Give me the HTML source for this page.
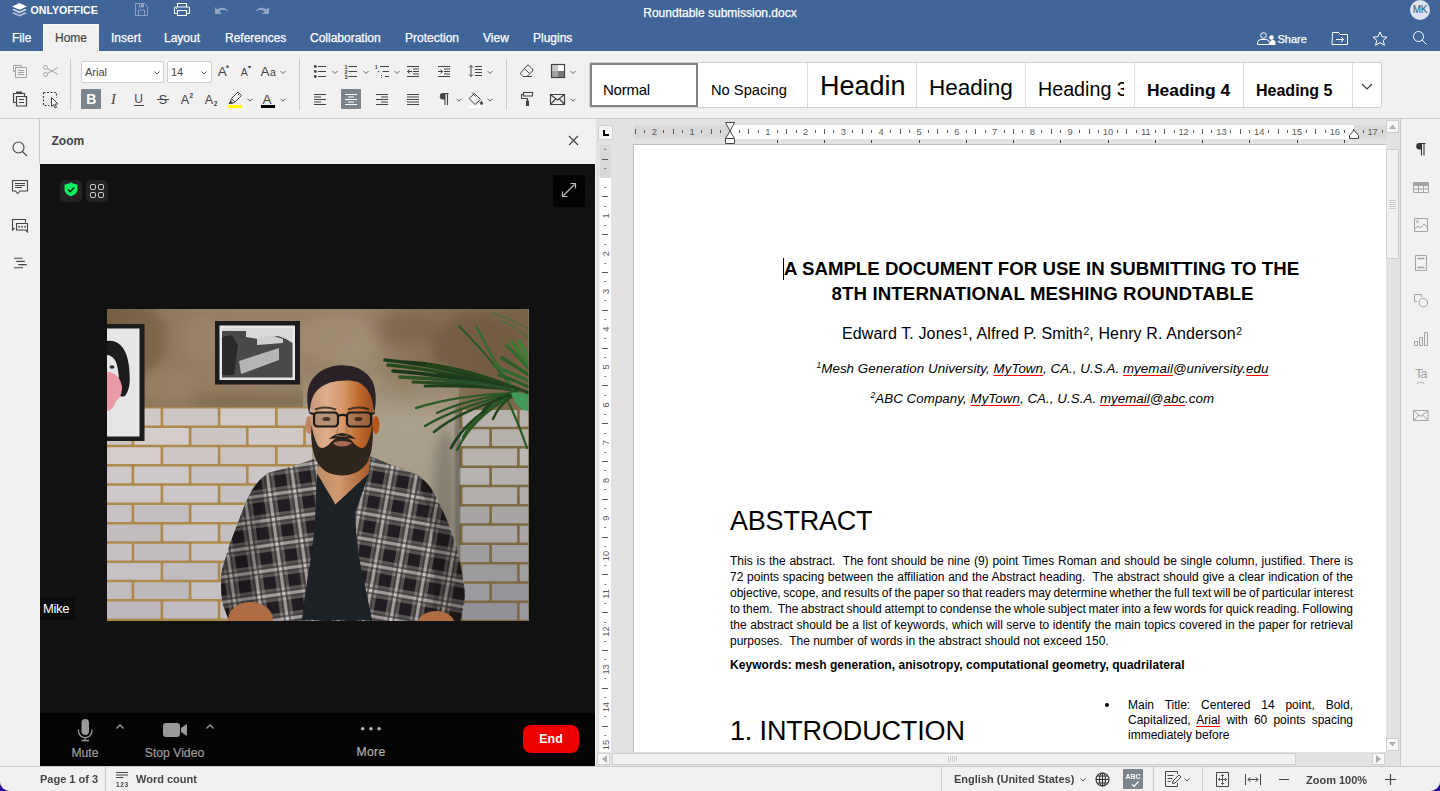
<!DOCTYPE html>
<html lang="en">
<head>
<meta charset="utf-8">
<title>Roundtable submission.docx</title>
<style>
*{box-sizing:border-box;margin:0;padding:0}
html,body{width:1440px;height:791px;overflow:hidden;background:#2a0a9c}
body{font-family:"Liberation Sans",Arial,sans-serif;font-size:11px;color:#444;position:relative}
#app{position:absolute;left:0;top:0;width:1440px;height:791px;background:#f1f1f1;border-radius:0 0 10px 10px;overflow:hidden}
.abs{position:absolute}
#hdr{position:absolute;left:0;top:0;width:1440px;height:51px;background:#3f6599}
#hdr .title{position:absolute;left:0;width:1440px;top:6px;text-align:center;color:#fff;font-size:12px;line-height:14px;-webkit-text-stroke:.25px #fff}
#hdr .logo{position:absolute;left:30.500px;top:3px;color:#fff;font-weight:bold;font-size:10.600px;line-height:14px;letter-spacing:0}
.tab{position:absolute;top:24px;height:27px;line-height:28px;color:#fff;font-size:12px;white-space:nowrap;-webkit-text-stroke:.25px #fff}
.tab.act{background:#f1f1f1;color:#444;text-align:center;box-shadow:inset 1px 1px 0 #fafafa;-webkit-text-stroke:.2px #444}
#tb{position:absolute;left:0;top:51px;width:1440px;height:68px;background:#f1f1f1;border-bottom:1px solid #cbcbcb}
.sep{position:absolute;width:1px;background:#cbcbcb;top:59px;height:51px}
.combo{position:absolute;height:22px;background:#fff;border:1px solid #cfcfcf;border-radius:2px;font-size:11px;line-height:21px;padding-left:3px;color:#444}
.btnact{position:absolute;background:#7d858c;border-radius:1px}
svg{position:absolute;overflow:visible}
.ic{fill:none;stroke:#444;stroke-width:1}
#gal{position:absolute;left:589px;top:62px;width:793px;height:46px;background:#fff;border:1px solid #cfcfcf;border-radius:2px}
.st{position:absolute;top:0;height:44px;border-right:1px solid #dcdcdc;color:#000;white-space:nowrap;overflow:hidden}
.st span{position:absolute;left:13px}
.st span.cl{left:12px;width:86px;overflow:hidden;height:36px}
#lsb{position:absolute;left:0;top:119px;width:40px;height:648px;background:#f1f1f1}
#zp{position:absolute;left:41px;top:119px;width:554px;height:647px;background:#111;box-shadow:-1px 0 0 #111}
#zp .hd{position:absolute;left:-1px;top:0;width:555px;height:45px;background:#f1f1f1;border-left:0 solid #cbcbcb}
#zp .hd b{position:absolute;left:11.500px;top:15px;font-size:12px;line-height:14px;color:#444}
#zp .bar{position:absolute;left:-1px;top:594px;width:555px;height:53px;background:#040404}
.zl{position:absolute;color:#9c9c9c;font-family:"Liberation Sans",Arial,sans-serif;font-size:12.200px;-webkit-text-stroke:.2px #9c9c9c;line-height:14px;white-space:nowrap;text-align:center}
#doc{position:absolute;left:596px;top:119px;width:804px;height:648px;background:#e2e2e2;overflow:hidden}
#page{position:absolute;left:37px;top:25px;width:760px;height:620px;background:#fff;border:1px solid #bdbdbd}
#rsb{position:absolute;left:1400px;top:119px;width:40px;height:648px;background:#f1f1f1;border-left:1px solid #cbcbcb}
#sb{position:absolute;left:0;top:766px;width:1440px;height:25px;background:#f1f1f1;border-top:1px solid #cbcbcb;font-weight:bold;font-size:11px;color:#444}
#sb span{position:absolute;top:6px;line-height:13px;white-space:nowrap}
.d{position:absolute;color:#000;white-space:nowrap;font-family:"Liberation Sans",Arial,sans-serif}
.sq{text-decoration:underline;text-decoration-color:#ff0000;text-decoration-thickness:1px;text-underline-offset:2px}
.j{position:absolute;left:730px;width:623px;font-size:12px;line-height:16px;color:#000;white-space:nowrap}
</style>
</head>
<body>
<div id="app">
<div id="hdr">
  <div class="logo">ONLYOFFICE</div>
  <div class="title">Roundtable submission.docx</div>
  <div class="tab" style="left:12px">File</div>
  <div class="tab act" style="left:43px;width:56px">Home</div>
  <div class="tab" style="left:111px">Insert</div>
  <div class="tab" style="left:164px">Layout</div>
  <div class="tab" style="left:225px">References</div>
  <div class="tab" style="left:310px">Collaboration</div>
  <div class="tab" style="left:405px">Protection</div>
  <div class="tab" style="left:483px">View</div>
  <div class="tab" style="left:533px">Plugins</div>
  <div class="tab" style="left:1277.500px;top:25px;font-size:11px">Share</div>
  <div class="abs" style="left:1410px;top:0;width:20px;height:20px;border-radius:50%;background:#dce3ee;color:#38527a;font-size:10px;line-height:20px;text-align:center;letter-spacing:-0.2px">MK</div>
</div>
<svg style="left:0;top:0" width="1440" height="51" viewBox="0 0 1440 51" fill="none" stroke="#fff" stroke-width="1">
  <!-- logo layers -->
  <g stroke="none" fill="#fff">
    <path d="M19.5 3l7.5 3.4l-7.5 3.4l-7.500-3.400z"/>
    <path d="M14 8.900l-2 .9l7.500 3.400l7.500-3.400l-2-.9l-5.500 2.500z" opacity=".8"/>
    <path d="M14 12.300l-2 .9l7.500 3.400l7.500-3.400l-2-.9l-5.500 2.500z" opacity=".6"/>
  </g>
  <!-- save (disabled) -->
  <g opacity=".4">
    <path d="M135.500 3.500h9l3 3v9h-12z"/>
    <path d="M138.500 15.500v-5.500h6v5.500M139.500 3.500v3.500h4v-3.500"/>
    <path d="M141 4h2v3h-2z" fill="#fff" stroke="none"/>
  </g>
  <!-- print -->
  <path d="M177.500 7v-3.500h9v3.500M177.500 13.500h-2.500a.5 .5 0 0 1-.5-.5v-5a1 1 0 0 1 1-1h13a1 1 0 0 1 1 1v5a.5 .5 0 0 1-.5 .5h-2.500M177.500 10.500h9v5h-9z" stroke-width="1.100"/>
  <rect x="176" y="8" width="1" height="1" fill="#fff" stroke="none"/>
  <!-- undo / redo -->
  <g fill="#fff" stroke="none" opacity=".42">
    <path d="M215 7v7h7l-2.600-2.600c2.500-1.900 6-2 9.600 .6c-2.500-4.500-8-5.500-11.500-2.500z"/>
    <path d="M269 7v7h-7l2.600-2.600c-2.500-1.900-6-2-9.600 .6c2.500-4.500 8-5.500 11.500-2.500z"/>
  </g>
  <!-- share -->
  <circle cx="1263.500" cy="35.500" r="2.800"/>
  <path d="M1257.500 44.500v-1.500a3.500 3.500 0 0 1 3.500-3.500h5a3.500 3.500 0 0 1 3.500 3.500v1.500z"/>
  <circle cx="1271.500" cy="37.500" r="2.300" fill="#fff" stroke="none"/>
  <path d="M1270 45v-2.500a2.500 2.500 0 0 1 2.500-2.500h.5a2.500 2.500 0 0 1 2.500 2.500v2.500z" fill="#fff" stroke="none"/>
  <!-- open location -->
  <path d="M1332.500 32.500h6l1.500 2h7.500v10h-15.500z"/>
  <path d="M1336 39.500h7.500M1341 37l2.500 2.500l-2.500 2.500"/>
  <!-- star -->
  <path d="M1380 32l2 4.700l5 .4l-3.800 3.300l1.200 4.900l-4.400-2.700l-4.400 2.700l1.200-4.900l-3.800-3.300l5-.4z" stroke-linejoin="miter"/>
  <!-- search -->
  <circle cx="1418.500" cy="36.500" r="5"/>
  <path d="M1422 40l4.500 4.500"/>
</svg>
<div id="tb"></div>
<div class="sep" style="left:70px"></div>
<div class="sep" style="left:299px"></div>
<div class="sep" style="left:506px"></div>
<div class="combo" style="left:81px;top:61px;width:83px">Arial</div>
<div class="combo" style="left:167px;top:61px;width:45px">14</div>
<div class="btnact" style="left:81px;top:89px;width:20px;height:20px"></div>
<div class="btnact" style="left:341px;top:89px;width:20px;height:20px"></div>
<div id="gal">
  <div class="st" style="left:0;top:0;width:108px;height:44px;border:2px solid #848484;font-size:15px;letter-spacing:-0.25px"><span style="left:11px;top:16px">Normal</span></div>
  <div class="st" style="left:109px;width:109px;font-size:14.700px"><span style="left:12px;top:19px">No Spacing</span></div>
  <div class="st" style="left:218px;width:109px;font-size:27px"><span class="cl" style="top:8px">Heading 1</span></div>
  <div class="st" style="left:327px;width:109px;font-size:22.500px"><span class="cl" style="top:12px">Heading 2</span></div>
  <div class="st" style="left:436px;width:109px;font-size:19.700px"><span class="cl" style="top:14.500px">Heading 3</span></div>
  <div class="st" style="left:545px;width:109px;font-size:17.400px;font-weight:bold"><span class="cl" style="top:17px">Heading 4</span></div>
  <div class="st" style="left:654px;width:109px;font-size:16px;font-weight:bold"><span class="cl" style="top:18.500px">Heading 5</span></div>
  <svg style="left:771px;top:20px" width="12" height="7" viewBox="0 0 12 7"><path d="M1 1l5 5l5-5" fill="none" stroke="#444" stroke-width="1.200"/></svg>
</div>
<svg style="left:0;top:51px" width="590" height="68" viewBox="0 51 590 68" fill="none" stroke="#444" stroke-width="1" font-family="Liberation Sans, Arial, sans-serif">
<g opacity=".45"><path d="M15.5 71.500h-2v-6h8v2M15.500 67.500h11v10h-11z"/><path d="M18 70.500h6M18 72.500h6M18 74.500h6"/><path d="M15 67.500h4" /></g>
<g opacity=".45"><circle cx="45.500" cy="67.500" r="2"/><circle cx="45.500" cy="74.500" r="2"/><path d="M47.300 68.500l10.700 6M47.300 73.500l10.700-6"/></g>
<path d="M16.500 102.500h-3v-9h11v2.500" stroke-width="1.200"/><path d="M16 92.500h6" stroke-width="2"/><path d="M16.500 96.500h10v9.500h-10z" stroke-width="1.200"/><path d="M19 99.500h5M19 102.500h5" stroke-width="1.200"/>
<path d="M43.500 92.500h13v5M43.500 92.500v13h6" stroke-dasharray="2 1.500" stroke-width="1.200"/><path d="M51.500 97.500v9l2-2l1.500 3.500l1.500-.7l-1.500-3.300h3z" fill="#fff" stroke-width="1"/>
<path d="M154.5 71.5l2.500 2.500l2.500-2.500" stroke="#5c5c5c" stroke-width="1"/>
<path d="M201.5 71.5l2.500 2.500l2.500-2.500" stroke="#5c5c5c" stroke-width="1"/>
<text x="217.700" y="76" font-size="13.500" fill="#444" stroke="none">A</text><path d="M225.500 67.500l2-2.500l2 2.500z" fill="#444" stroke="none"/>
<text x="240.800" y="76" font-size="10.500" fill="#444" stroke="none">A</text><path d="M247.500 66l2 2.500l2-2.500z" fill="#444" stroke="none"/>
<text x="260.500" y="76" font-size="13.500" fill="#444" stroke="none">A</text><text x="270" y="76" font-size="10.500" fill="#444" stroke="none">a</text>
<path d="M280.5 71.0l2.500 2.500l2.500-2.500" stroke="#5c5c5c" stroke-width="1"/>
<text x="86.300" y="104.200" font-size="14" font-weight="bold" fill="#fff" stroke="none">B</text>
<text x="111" y="104.200" font-size="14.500" font-style="italic" font-family="Liberation Serif, serif" fill="#444" stroke="none">I</text>
<text x="134.300" y="103" font-size="12" fill="#444" stroke="none">U</text><path d="M134 105.500h10"/>
<text x="158.700" y="103.500" font-size="12.500" fill="#444" stroke="none">S</text><path d="M157 99.500h12"/>
<text x="180.700" y="104" font-size="12.500" fill="#444" stroke="none">A</text><text x="189.500" y="97.500" font-size="6.500" font-weight="bold" fill="#444" stroke="none">2</text>
<text x="204.700" y="104" font-size="12.500" fill="#444" stroke="none">A</text><text x="213.700" y="105.500" font-size="6.500" font-weight="bold" fill="#444" stroke="none">2</text>
<path d="M238 92l3.500 3.500l-6.500 6.500l-3.500-3.500zM239.500 93.500l-1.500 1.500M231.500 98.500l-1.500 3.500l-1 1.500h3l3-1.500" stroke-width="1"/><path d="M229.500 103.300l1.500-2.800l2 2z" fill="#444" stroke="none"/>
<rect x="228" y="105" width="14" height="3" fill="#ffff00" stroke="none"/>
<path d="M247.5 98.7l2.500 2.500l2.500-2.500" stroke="#5c5c5c" stroke-width="1"/>
<text x="262.500" y="104" font-size="13.500" fill="#444" stroke="none">A</text><rect x="261" y="105" width="14" height="3" fill="#000" stroke="none"/>
<path d="M280.5 98.7l2.500 2.500l2.500-2.500" stroke="#5c5c5c" stroke-width="1"/>
<circle cx="315.300" cy="66.5" r="1.400" fill="#444" stroke="none"/><path d="M318 66.5h8"/>
<circle cx="315.300" cy="71.5" r="1.400" fill="#444" stroke="none"/><path d="M318 71.5h8"/>
<circle cx="315.300" cy="76.5" r="1.400" fill="#444" stroke="none"/><path d="M318 76.5h8"/>
<path d="M332.5 71.0l2.500 2.500l2.500-2.500" stroke="#5c5c5c" stroke-width="1"/>
<text x="344.500" y="68.5" font-size="5.500" font-weight="bold" fill="#444" stroke="none">1</text><path d="M348.500 66.5h8.500"/>
<text x="344.500" y="73.5" font-size="5.500" font-weight="bold" fill="#444" stroke="none">2</text><path d="M348.500 71.5h8.500"/>
<text x="344.500" y="78.5" font-size="5.500" font-weight="bold" fill="#444" stroke="none">3</text><path d="M348.500 76.5h8.500"/>
<path d="M363.5 71.0l2.500 2.500l2.500-2.500" stroke="#5c5c5c" stroke-width="1"/>
<text x="374.700" y="68.500" font-size="5.500" font-weight="bold" fill="#444" stroke="none">1</text><path d="M380 66.500h9M382.500 71.500h6.500M385 76.500h4"/><rect x="378" y="71" width="1.200" height="1.200" fill="#444" stroke="none"/><rect x="381" y="75" width="1" height="1" fill="#444" stroke="none"/><rect x="381" y="77" width="1" height="1" fill="#444" stroke="none"/>
<path d="M394.5 71.0l2.500 2.500l2.500-2.500" stroke="#5c5c5c" stroke-width="1"/>
<path d="M407 66.500h12M407 76.500h12M413 69h6M413 71.500h6M413 74h6M407.500 71.500h4.500M409.500 69.500l-2 2l2 2"/>
<path d="M438 66.500h12M438 76.500h12M444 69h6M444 71.500h6M444 74h6M438 71.500h4.500M440.500 69.500l2 2l-2 2"/>
<path d="M471 65.500v11M469 67.500l2-2l2 2M469 74.500l2 2l2-2M475 66.500h7M475 69.500h7M475 72.500h7M475 75.500h7"/>
<path d="M487.5 71.0l2.500 2.500l2.500-2.500" stroke="#5c5c5c" stroke-width="1"/>
<path d="M314 94.500h12M314 97h7M314 99.500h12M314 102h7M314 104.500h12"/>
<path d="M345 94.500h12M348 97h6M345 99.500h12M348 102h6M345 104.500h12" stroke="#fff"/>
<path d="M376 94.500h12M381 97h7M376 99.500h12M381 102h7M376 104.500h12"/>
<path d="M407 94.500h12M407 97h12M407 99.500h12M407 102h12M407 104.500h12"/>
<path d="M445 93.500v11.500M447.500 93.500v11.500M448.500 93.500h-5" stroke-width="1.100"/><path d="M445 93h-2a3.200 3.200 0 0 0 0 6.400h2z" fill="#444" stroke="none"/>
<path d="M456.5 98.7l2.500 2.500l2.500-2.500" stroke="#5c5c5c" stroke-width="1"/>
<path d="M474.500 93.500l6 6l-5.500 5l-6-6zM472 92.500l3.500 4"/><path d="M481.500 100.500c1 1.500 1.500 2 1.500 2.800a1.500 1.500 0 0 1-3 0c0-.8 .5-1.300 1.500-2.800z" fill="#444" stroke="none"/><rect x="468" y="105.500" width="14" height="2.500" fill="#fff" stroke="none"/>
<path d="M487.5 98.7l2.500 2.500l2.500-2.500" stroke="#5c5c5c" stroke-width="1"/>
<path d="M529 65.500l3.500 3.500a1.500 1.500 0 0 1 0 2l-5.500 5.500h-4l-2-2a1.500 1.500 0 0 1 0-2l6-7a1.500 1.500 0 0 1 2 0zM524.500 68.500l5 5M523 76.500h9"/>
<rect x="552" y="65" width="6" height="6" fill="#c9c9c9" stroke="none"/><rect x="558" y="65" width="6" height="6" fill="#fff" stroke="none"/><rect x="552" y="71" width="6" height="6" fill="#a3a3a3" stroke="none"/><rect x="558" y="71" width="6" height="6" fill="#7a7a7a" stroke="none"/><rect x="551.500" y="64.500" width="13" height="13" stroke-width="1.200"/>
<path d="M570.5 71.0l2.500 2.500l2.500-2.500" stroke="#5c5c5c" stroke-width="1"/>
<path d="M523.500 92.500h9v3.500h-9zM523.500 94.500h-2v4h6v3" stroke-width="1.100"/><rect x="526" y="100.500" width="3" height="5.500" fill="#444" stroke="none"/>
<path d="M550.500 94.500h14v10h-14zM550.500 94.500l7 5.500l7-5.500M550.500 104.500l5.500-6M564.500 104.500l-5.500-6" stroke-width="1.200"/>
<path d="M570.5 98.7l2.500 2.500l2.500-2.500" stroke="#5c5c5c" stroke-width="1"/>
</svg>
<div id="lsb"></div>
<div class="abs" style="left:39px;top:119px;width:1px;height:45px;background:#cbcbcb"></div>
<div id="zp">
  <div class="hd"><b>Zoom</b></div>
  <div class="abs" style="left:19px;top:61px;width:22px;height:22px;border-radius:5px;background:#232323"></div>
  <div class="abs" style="left:45px;top:61px;width:22px;height:22px;border-radius:5px;background:#232323"></div>
  <div class="abs" style="left:512px;top:56px;width:32px;height:32px;border-radius:3px;background:#040404"></div>
  <div class="abs" id="photo" style="left:66px;top:190px;width:421.500px;height:312px;background:#8a7f70">
<svg style="left:0;top:0" width="421.5" height="312" viewBox="0 0 421.5 312" preserveAspectRatio="none">
<defs>
<linearGradient id="cg" x1="0" y1="0" x2="1" y2="0"><stop offset="0" stop-color="#846a4c"/><stop offset=".12" stop-color="#917a5c"/><stop offset=".35" stop-color="#988266"/><stop offset=".6" stop-color="#98836a"/><stop offset=".78" stop-color="#877054"/><stop offset="1" stop-color="#786248"/></linearGradient>
<linearGradient id="colg" x1="0" y1="0" x2="0" y2="1"><stop offset="0" stop-color="#aba08b" stop-opacity="0"/><stop offset=".2" stop-color="#aba08b"/><stop offset=".55" stop-color="#a59b88"/><stop offset="1" stop-color="#938b7c"/></linearGradient>
<linearGradient id="skin" x1="0" y1="0" x2="1" y2="0"><stop offset="0" stop-color="#c99878"/><stop offset=".25" stop-color="#dcae8e"/><stop offset=".5" stop-color="#d79a6c"/><stop offset=".78" stop-color="#c0682e"/><stop offset="1" stop-color="#9c4f22"/></linearGradient>
<linearGradient id="neck" x1="0" y1="0" x2="1" y2="0"><stop offset="0" stop-color="#c08a62"/><stop offset=".4" stop-color="#cf9a70"/><stop offset="1" stop-color="#a85a28"/></linearGradient>
<filter id="b1" x="-10%" y="-10%" width="120%" height="120%"><feGaussianBlur stdDeviation="0.6"/></filter>
<filter id="b2" x="-20%" y="-20%" width="140%" height="140%"><feGaussianBlur stdDeviation="1.5"/></filter>
<filter id="b6" x="-30%" y="-30%" width="160%" height="160%"><feGaussianBlur stdDeviation="6"/></filter>
<pattern id="plaid" width="25" height="25" patternUnits="userSpaceOnUse" patternTransform="rotate(-8) translate(4 0)">
<rect width="25" height="25" fill="#1a1b21"/>
<rect x="0" y="0" width="13" height="25" fill="#fff" opacity=".27"/>
<rect x="0" y="0" width="25" height="13" fill="#fff" opacity=".27"/>
<rect x="4.500" y="0" width="4" height="25" fill="#fff" opacity=".5"/>
<rect x="0" y="4.500" width="25" height="4" fill="#fff" opacity=".5"/>
<path d="M4 0v25M9 0v25M0 4h25M0 9h25" stroke="#101014" stroke-width="1.100" opacity=".85"/>
</pattern>
<pattern id="plaid2" width="25" height="25" patternUnits="userSpaceOnUse" patternTransform="rotate(10) translate(2 0)">
<rect width="25" height="25" fill="#1a1b21"/>
<rect x="0" y="0" width="13" height="25" fill="#fff" opacity=".27"/>
<rect x="0" y="0" width="25" height="13" fill="#fff" opacity=".27"/>
<rect x="4.500" y="0" width="4" height="25" fill="#fff" opacity=".5"/>
<rect x="0" y="4.500" width="25" height="4" fill="#fff" opacity=".5"/>
<path d="M4 0v25M9 0v25M0 4h25M0 9h25" stroke="#101014" stroke-width="1.100" opacity=".85"/>
</pattern>
<clipPath id="pc"><rect width="421.5" height="312"/></clipPath>
</defs>
<g clip-path="url(#pc)">
<rect width="421.5" height="312" fill="url(#cg)"/>
<g filter="url(#b6)">
<ellipse cx="20" cy="30" rx="40" ry="40" fill="#6a5438" opacity="0.50"/>
<ellipse cx="150" cy="92" rx="70" ry="8" fill="#6a5840" opacity="0.50"/>
<ellipse cx="230" cy="30" rx="40" ry="25" fill="#a89478" opacity="0.45"/>
<ellipse cx="300" cy="20" rx="30" ry="18" fill="#745e42" opacity="0.50"/>
<ellipse cx="370" cy="40" rx="45" ry="35" fill="#69553a" opacity="0.60"/>
<ellipse cx="95" cy="30" rx="20" ry="25" fill="#a08c70" opacity="0.40"/>
<ellipse cx="255" cy="60" rx="25" ry="30" fill="#a6947a" opacity="0.40"/>
<ellipse cx="60" cy="75" rx="30" ry="15" fill="#9e8a6e" opacity="0.40"/>
<ellipse cx="330" cy="80" rx="25" ry="20" fill="#988870" opacity="0.50"/>
</g>
<rect x="196" y="60" width="156" height="252" fill="url(#colg)"/>
<g filter="url(#b6)"><ellipse cx="338" cy="200" rx="12" ry="80" fill="#6a675f" opacity=".55"/><ellipse cx="300" cy="130" rx="25" ry="25" fill="#aaa08e" opacity=".4"/></g>
<g filter="url(#b1)">
<rect x="0.0" y="98.1" width="205.0" height="215.4" fill="#ad8a4c"/>
<rect x="0.0" y="99.6" width="53.6" height="16.8" rx="1" fill="#d0c9c8"/>
<rect x="56.2" y="99.6" width="54.6" height="16.8" rx="1" fill="#cdc6c5"/>
<rect x="113.4" y="99.6" width="54.6" height="16.8" rx="1" fill="#d1cac9"/>
<rect x="170.6" y="99.6" width="34.4" height="16.8" rx="1" fill="#cbc4c3"/>
<rect x="0.0" y="118.9" width="24.6" height="16.8" rx="1" fill="#ccc5c4"/>
<rect x="27.2" y="118.9" width="54.6" height="16.8" rx="1" fill="#d3cccb"/>
<rect x="84.4" y="118.9" width="54.6" height="16.8" rx="1" fill="#ccc5c4"/>
<rect x="141.6" y="118.9" width="54.6" height="16.8" rx="1" fill="#d0c9c8"/>
<rect x="198.8" y="118.9" width="6.2" height="16.8" rx="1" fill="#cbc4c3"/>
<rect x="0.0" y="138.2" width="53.6" height="16.8" rx="1" fill="#d3cccb"/>
<rect x="56.2" y="138.2" width="54.6" height="16.8" rx="1" fill="#cec7c6"/>
<rect x="113.4" y="138.2" width="54.6" height="16.8" rx="1" fill="#cbc4c3"/>
<rect x="170.6" y="138.2" width="34.4" height="16.8" rx="1" fill="#ccc5c4"/>
<rect x="0.0" y="157.5" width="24.6" height="16.8" rx="1" fill="#cec8c8"/>
<rect x="27.2" y="157.5" width="54.6" height="16.8" rx="1" fill="#cec8c8"/>
<rect x="84.4" y="157.5" width="54.6" height="16.8" rx="1" fill="#c9c3c3"/>
<rect x="141.6" y="157.5" width="54.6" height="16.8" rx="1" fill="#cbc5c5"/>
<rect x="198.8" y="157.5" width="6.2" height="16.8" rx="1" fill="#c9c3c3"/>
<rect x="0.0" y="176.8" width="53.6" height="16.8" rx="1" fill="#cec8c9"/>
<rect x="56.2" y="176.8" width="54.6" height="16.8" rx="1" fill="#ccc6c7"/>
<rect x="113.4" y="176.8" width="54.6" height="16.8" rx="1" fill="#c6c0c1"/>
<rect x="170.6" y="176.8" width="34.4" height="16.8" rx="1" fill="#c7c1c2"/>
<rect x="0.0" y="196.1" width="24.6" height="16.8" rx="1" fill="#c7c1c3"/>
<rect x="27.2" y="196.1" width="54.6" height="16.8" rx="1" fill="#c4bec0"/>
<rect x="84.4" y="196.1" width="54.6" height="16.8" rx="1" fill="#cac4c6"/>
<rect x="141.6" y="196.1" width="54.6" height="16.8" rx="1" fill="#c4bec0"/>
<rect x="198.8" y="196.1" width="6.2" height="16.8" rx="1" fill="#c7c1c3"/>
<rect x="0.0" y="215.4" width="53.6" height="16.8" rx="1" fill="#c2bcbe"/>
<rect x="56.2" y="215.4" width="54.6" height="16.8" rx="1" fill="#cac4c6"/>
<rect x="113.4" y="215.4" width="54.6" height="16.8" rx="1" fill="#c4bec0"/>
<rect x="170.6" y="215.4" width="34.4" height="16.8" rx="1" fill="#c6c0c2"/>
<rect x="0.0" y="234.7" width="24.6" height="16.8" rx="1" fill="#c5c1c3"/>
<rect x="27.2" y="234.7" width="54.6" height="16.8" rx="1" fill="#c1bdbf"/>
<rect x="84.4" y="234.7" width="54.6" height="16.8" rx="1" fill="#c7c3c5"/>
<rect x="141.6" y="234.7" width="54.6" height="16.8" rx="1" fill="#c0bcbe"/>
<rect x="198.8" y="234.7" width="6.2" height="16.8" rx="1" fill="#c3bfc1"/>
<rect x="0.0" y="254.0" width="53.6" height="16.8" rx="1" fill="#c5c1c4"/>
<rect x="56.2" y="254.0" width="54.6" height="16.8" rx="1" fill="#bfbbbe"/>
<rect x="113.4" y="254.0" width="54.6" height="16.8" rx="1" fill="#bebabd"/>
<rect x="170.6" y="254.0" width="34.4" height="16.8" rx="1" fill="#c0bcbf"/>
<rect x="0.0" y="273.3" width="24.6" height="16.8" rx="1" fill="#c0bcc0"/>
<rect x="27.2" y="273.3" width="54.6" height="16.8" rx="1" fill="#bcb8bc"/>
<rect x="84.4" y="273.3" width="54.6" height="16.8" rx="1" fill="#c3bfc3"/>
<rect x="141.6" y="273.3" width="54.6" height="16.8" rx="1" fill="#bcb8bc"/>
<rect x="198.8" y="273.3" width="6.2" height="16.8" rx="1" fill="#bbb7bb"/>
<rect x="0.0" y="292.6" width="53.6" height="16.8" rx="1" fill="#bcb8bd"/>
<rect x="56.2" y="292.6" width="54.6" height="16.8" rx="1" fill="#c0bcc1"/>
<rect x="113.4" y="292.6" width="54.6" height="16.8" rx="1" fill="#c1bdc2"/>
<rect x="170.6" y="292.6" width="34.4" height="16.8" rx="1" fill="#bfbbc0"/>
<rect x="0.0" y="311.9" width="24.6" height="16.8" rx="1" fill="#bcb9bf"/>
<rect x="27.2" y="311.9" width="54.6" height="16.8" rx="1" fill="#bebbc1"/>
<rect x="84.4" y="311.9" width="54.6" height="16.8" rx="1" fill="#bebbc1"/>
<rect x="141.6" y="311.9" width="54.6" height="16.8" rx="1" fill="#bcb9bf"/>
<rect x="198.8" y="311.9" width="6.2" height="16.8" rx="1" fill="#bbb8be"/>
<rect x="352.5" y="99.5" width="69.0" height="214.0" fill="#7c6a42"/>
<rect x="355.5" y="101.0" width="54.6" height="16.8" rx="1" fill="#b7b2ac"/>
<rect x="412.7" y="101.0" width="8.8" height="16.8" rx="1" fill="#b6b1ab"/>
<rect x="352.5" y="120.3" width="29.8" height="16.8" rx="1" fill="#b7b2ac"/>
<rect x="384.9" y="120.3" width="36.6" height="16.8" rx="1" fill="#b5b0aa"/>
<rect x="355.5" y="139.6" width="54.6" height="16.8" rx="1" fill="#b8b3ad"/>
<rect x="412.7" y="139.6" width="8.8" height="16.8" rx="1" fill="#bcb7b1"/>
<rect x="352.5" y="158.9" width="29.8" height="16.8" rx="1" fill="#b6b2ad"/>
<rect x="384.9" y="158.9" width="36.6" height="16.8" rx="1" fill="#b4b0ab"/>
<rect x="355.5" y="178.2" width="54.6" height="16.8" rx="1" fill="#b2aeab"/>
<rect x="412.7" y="178.2" width="8.8" height="16.8" rx="1" fill="#afaba8"/>
<rect x="352.5" y="197.5" width="29.8" height="16.8" rx="1" fill="#a8a4a3"/>
<rect x="384.9" y="197.5" width="36.6" height="16.8" rx="1" fill="#a8a4a3"/>
<rect x="355.5" y="216.8" width="54.6" height="16.8" rx="1" fill="#aba7a8"/>
<rect x="412.7" y="216.8" width="8.8" height="16.8" rx="1" fill="#a9a5a6"/>
<rect x="352.5" y="236.1" width="29.8" height="16.8" rx="1" fill="#a09d9f"/>
<rect x="384.9" y="236.1" width="36.6" height="16.8" rx="1" fill="#a3a0a2"/>
<rect x="355.5" y="255.4" width="54.6" height="16.8" rx="1" fill="#9c9a9d"/>
<rect x="412.7" y="255.4" width="8.8" height="16.8" rx="1" fill="#a19fa2"/>
<rect x="352.5" y="274.7" width="29.8" height="16.8" rx="1" fill="#9c9a9f"/>
<rect x="384.9" y="274.7" width="36.6" height="16.8" rx="1" fill="#969499"/>
<rect x="355.5" y="294.0" width="54.6" height="16.8" rx="1" fill="#929198"/>
<rect x="412.7" y="294.0" width="8.8" height="16.8" rx="1" fill="#99989f"/>
</g>
<rect x="348" y="96" width="5" height="215" fill="#4e4c48" opacity=".5" filter="url(#b2)"/>
<g filter="url(#b1)">
<rect x="-5" y="15" width="42.500" height="117" fill="#1c1c1c"/><rect x="-5" y="19.500" width="37.500" height="108" fill="#e6e5e7"/>
<path d="M0 32c12-2 20 8 22 25c1 12 2 22-4 30c-6 2-8-2-7-8c2-10 0-22-3-28c-3-4-6-5-8-5z" fill="#1d1a1a"/>
<path d="M0 63c8 0 14 6 15 15c0 8-3 12-6 14c-2 6-5 10-9 10z" fill="#ea9aa6"/>
<ellipse cx="5" cy="58" rx="2.500" ry="1.800" fill="#333"/>
<rect x="108" y="12" width="85" height="63.500" fill="#1d1d1d"/><rect x="112.500" y="16.500" width="75.500" height="54.500" fill="#e9e8e6"/><rect x="115" y="19" width="70.500" height="49.500" fill="#d9d9d9"/>
<path d="M115 22h24v6l12 2l20-3l8 3l6.500 4v34.500h-70.500z" fill="#4a4a4a"/><path d="M115 28l10-2l6 10l-4 30h-12z" fill="#2a2a2a"/><path d="M132 52l40-13v12l-38 14z" fill="#b5b5b5"/><path d="M150 30l12-4l14 4v4l-26 2z" fill="#cfcfcf"/>
</g>
<g filter="url(#b1)" fill="none" stroke-linecap="round">
<path d="M410 82Q350 58 278 51" stroke="#1e3d1c" stroke-width="3.6"/>
<path d="M410 82Q345 62 281 56" stroke="#27491f" stroke-width="3.6"/>
<path d="M410 82Q345 66 286 62" stroke="#1c371a" stroke-width="3.6"/>
<path d="M408 80Q350 70 293 68" stroke="#2d5227" stroke-width="3.4"/>
<path d="M405 78Q340 54 298 53" stroke="#1a3418" stroke-width="3.0"/>
<path d="M404 80Q350 74 306 73" stroke="#264822" stroke-width="3.2"/>
<path d="M404 80Q352 76 318 77" stroke="#1f3f1d" stroke-width="3.0"/>
<path d="M410 80Q360 60 320 56" stroke="#23441f" stroke-width="4.0"/>
<path d="M410 82Q365 68 330 66" stroke="#1d3a1b" stroke-width="4.0"/>
<path d="M410 82Q370 72 340 72" stroke="#28502a" stroke-width="3.6"/>
<path d="M408 84Q350 86 309 99" stroke="#2f5a2a" stroke-width="2.4"/>
<path d="M408 84Q350 98 318 117" stroke="#2a5226" stroke-width="2.4"/>
<path d="M408 86Q355 100 327 123" stroke="#234620" stroke-width="2.6"/>
<path d="M408 86Q362 105 344 139" stroke="#1f3f1d" stroke-width="2.8"/>
<path d="M408 86Q368 105 350 141" stroke="#2c5628" stroke-width="2.4"/>
<path d="M408 84Q360 90 330 104" stroke="#2a5226" stroke-width="2.2"/>
<path d="M408 86Q372 100 356 128" stroke="#2a5a28" stroke-width="2.4"/>
<path d="M406 80Q380 45 352 17" stroke="#2c5427" stroke-width="2.0"/>
<path d="M406 80Q385 50 370 18" stroke="#356a2f" stroke-width="2.4"/>
<path d="M398 86Q410 110 420 139" stroke="#2a5a28" stroke-width="2.2"/>
<path d="M402 86Q382 92 375 104" stroke="#1f3f1d" stroke-width="2.6"/>
<path d="M406 86Q392 96 386 110" stroke="#23441f" stroke-width="2.4"/>
<path d="M422 60Q410 45 400 37" stroke="#2f6a2c" stroke-width="3.4"/>
<path d="M422 55Q412 42 405 33" stroke="#3a7a33" stroke-width="3.4"/>
<path d="M422 66Q405 55 395 49" stroke="#2a5c27" stroke-width="3.4"/>
<path d="M422 72Q400 62 387 57" stroke="#336b2e" stroke-width="3.4"/>
<path d="M422 48Q416 40 412 32" stroke="#3c8236" stroke-width="3.4"/>
<path d="M422 78Q405 70 392 66" stroke="#2a5c27" stroke-width="3.2"/>
<path d="M422 84Q408 78 398 76" stroke="#23441f" stroke-width="3.0"/>
<path d="M422 20Q400 8 385 4" stroke="#4a6a3a" stroke-width="1.2"/>
<path d="M422 30Q405 15 395 12" stroke="#4a6a3a" stroke-width="1.2"/>
<path d="M404 84c6-2 12 0 18 2v16c-8 0-14-6-18-18z" fill="#3f9a57" stroke="none"/>
</g>
<g filter="url(#b1)">
<path d="M209 149c-14 6-32 10-48 15c-12 8-20 22-26 39c-6 16-11 28-15 41c-3 10-6 18-6 26c0 9 0 18 2 26l6 16h232l3-16c2-10 0-18-1-26c-2-12-4-22-6.600-32c-4-14-10-30-17.400-43.500c-6-14-12-22-21.500-28.500c-16-6-32-12-47.500-19z" fill="url(#plaid)"/>
<path d="M263 147c15.500 7 31.500 13 47.500 19c9.500 6.500 15.500 14.500 21.500 28.500c7.400 13.500 13.400 29.500 17.400 43.500c2.600 10 4.600 20 6.600 32c1 8 3 16 1 26l-3 16h-89l-13-62l-4.200-43z" fill="url(#plaid2)"/>
<path d="M209 149c-14 6-32 10-48 15c-12 8-20 22-26 39c-6 16-11 28-15 41c-3 10-6 18-6 26c0 9 0 18 2 26l6 16h232l3-16c2-10 0-18-1-26c-2-12-4-22-6.600-32c-4-14-10-30-17.400-43.500c-6-14-12-22-21.500-28.500c-16-6-32-12-47.500-19z" fill="#5a3a20" opacity=".16"/>
<path d="M310 166c9.500 6.500 15.500 14.500 21.500 28.500c7.400 13.500 13.400 29.500 17.400 43.500c2.600 10 4.600 20 6.600 32c1 8 3 16 1 26l-3 16h-30c8-50 4-100-13.500-146z" fill="#000" opacity=".22"/>
<path d="M161 164c-12 8-20 22-26 39c-6 16-11 28-15 41c-3 10-6 18-6 26c0 9 0 18 2 26l6 16h30c-6-40 0-100 9-148z" fill="#000" opacity=".18"/>
<path d="M210 164l18.400 31.600l33.600-31.600c-4 14-10 28-14.200 41c1 14 2 28 4.200 43.600l13 62.400h-70c3-28 8-56 11.800-84c2-22 2.200-42 3.200-63z" fill="#1c2028"/>
<path d="M211 150c2 8 0 12-1 14l18.400 31.600l33.600-31.600c0-6 0-12 1-17c-12 8-36 10-52 3z" fill="url(#neck)"/>
<ellipse cx="143.500" cy="311" rx="22.500" ry="18" fill="#b06c42"/><ellipse cx="329" cy="315" rx="18.500" ry="13" fill="#b06c42"/>
<ellipse cx="202" cy="116" rx="3.500" ry="9" fill="#c08462"/><ellipse cx="269" cy="116" rx="3.500" ry="9" fill="#b4541f"/>
<path d="M204 100c-2-22 8-36 31-36c24 0 33 14 31 36c1 20-1 36-6 48c-6 12-16 18-25 18c-10 0-20-6-25.500-18c-5-12-6.500-28-5.500-48z" fill="url(#skin)"/>
<path d="M204.500 116c1.500 8 3 14 6 20c3 5 8 3 12-1c4-5 8-7 12.500-7c5 0 9 2 12.500 7c4 4 9 6 12 1c3-6 4.500-12 6-20c1 14 0 27-5 37c-6 10-16 13.500-25.500 13.500c-10 0-19-3.500-25-13.500c-5-10-6.500-23-5.500-37z" fill="#2d251f"/>
<path d="M222 130c4-4 9-6 13-6s10 2 14 6c-3 0-8-1-14-1s-10 1-13 1z" fill="#2b231e"/>
<path d="M226 134c3-1.500 6-2 9-2s7 .5 10 2c-3 2.500-6 3.500-10 3.500s-7-1-9-3.500z" fill="#a86a55"/>
<path d="M202.500 106c-3.500-14-3-28 3-36c8-10 20-14.500 32-13.500c12 0 23 6 28 16c4 8 4 22 1.500 33c-.5-10-2-17-5-22c-3-5-6-8-10-10c-8-3-20-2-29 0c-8 3-13 7-16 12c-3 6-4 12-4.500 20.500z" fill="#292225"/>
<g fill="#8a7462" fill-opacity=".45" stroke="#1f1b1a" stroke-width="2.200"><rect x="207" y="103.500" width="24" height="14" rx="3.500"/><rect x="240" y="103.500" width="24" height="14" rx="3.500"/></g><path d="M231 107c3-1.500 6-1.500 9 0M207 105l-4-1M264 105l3.500-1" stroke="#1f1b1a" stroke-width="2" fill="none"/>
<path d="M208 100.500c6-2.500 14-2.500 21 0M241 100.500c7-2.500 15-2.500 21 0" stroke="#2a1f1a" stroke-width="2" fill="none" opacity=".8"/>
<ellipse cx="219.500" cy="110" rx="4" ry="2" fill="#2a1d16" opacity=".8"/><ellipse cx="251.500" cy="110" rx="4" ry="2" fill="#2a1d16" opacity=".8"/>
<path d="M231 118c0 4-2 6-2 8c2 2 10 2 12 0c0-2-2-4-2-8" fill="none" stroke="#9a6a48" stroke-width="1.200" opacity=".7"/>
</g>
</g>
</svg>
</div><!--/photo-->
  <div class="abs" style="left:-1px;top:478px;width:35px;height:23px;background:#0b0b0b;color:#fff;font-family:'Liberation Sans',Arial,sans-serif;font-size:13px;line-height:23px;padding-left:3px;letter-spacing:-0.3px">Mike</div>
  <div class="bar"></div>
  <div class="zl" style="left:14px;top:627px;width:60px">Mute</div>
  <div class="zl" style="left:93.500px;top:627px;width:80px">Stop Video</div>
  <div class="zl" style="left:300px;top:626px;width:60px;color:#adadad;-webkit-text-stroke:.2px #adadad;letter-spacing:0.3px">More</div>
  <div class="abs" style="left:482px;top:606px;width:56px;height:28px;border-radius:8px;background:#ee0000;color:#fff;font-family:'Liberation Sans',Arial,sans-serif;font-weight:bold;font-size:12.400px;line-height:29px;text-align:center">End</div>
</div>
<svg style="left:0;top:119px" width="596" height="648" viewBox="0 119 596 648" fill="none" stroke="#444" stroke-width="1.100">
  <!-- left sidebar -->
  <circle cx="18.500" cy="147.500" r="5.500"/><path d="M22.500 151.500l4.500 4.500"/>
  <path d="M12.500 180.500h15v10.500h-7.500l-2.300 2.500l-2.300-2.500h-2.900zM15 183.500h10M15 185.500h10M15 187.500h7"/>
  <path d="M25.500 222.500v-3h-13v10.500l2-2M16.500 223.500h11v8.500l-2-2h-9z"/><path d="M18.200 226h1.600v1.600h-1.600zM21.200 226h1.600v1.600h-1.600zM24.200 226h1.600v1.600h-1.600z" fill="#444" stroke="none"/>
  <path d="M14 258.200h8.500M16.300 261.400h8.500M18.300 264.600h8.500M14 267.700h9"/>
  <!-- close -->
  <path d="M569 136l9 9M578 136l-9 9" stroke-width="1.200"/>
  <!-- shield -->
  <path d="M71 182.200c2 1.500 4 2 6.500 2.200v5c0 3.500-3 5.500-6.500 6.800c-3.500-1.300-6.500-3.300-6.500-6.800v-5c2.500-.2 4.500-.7 6.500-2.200z" fill="#07f060" stroke="none"/>
  <path d="M68 189.500l2.200 2.200l4-4.200" stroke="#1a1a1a" stroke-width="1.400"/>
  <!-- grid -->
  <g stroke="#cfcfcf" stroke-width="1">
    <rect x="90.500" y="184.500" width="5" height="5" rx="1.300"/><rect x="98.500" y="184.500" width="5" height="5" rx="1.300"/>
    <rect x="90.500" y="192.500" width="5" height="5" rx="1.300"/><rect x="98.500" y="192.500" width="5" height="5" rx="1.300"/>
  </g>
  <!-- expand -->
  <g stroke="#bdbdbd" stroke-width="1.200"><path d="M563.500 195.500l11-11M570.500 183.500h5v5M562.500 191.500v5h5"/></g>
  <!-- mic -->
  <g stroke="#9a9a9a" stroke-width="1.300">
    <rect x="81.500" y="719" width="7.500" height="16" rx="3.700" fill="#9a9a9a" stroke="none"/>
    <path d="M78.500 729.500v1.500a6.700 6.700 0 0 0 13.400 0v-1.500M85.200 737.700v3M81.500 740.500h7.500"/>
  </g>
  <!-- carets -->
  <path d="M116.500 728.500l3.500-3.500l3.500 3.500M206.500 728.500l3.500-3.500l3.500 3.500" stroke="#9a9a9a" stroke-width="1.300"/>
  <!-- video -->
  <rect x="163" y="723" width="17" height="14" rx="3" fill="#9a9a9a" stroke="none"/>
  <path d="M181 728l5-3.500a.7 .7 0 0 1 1 .6v9.800a.7 .7 0 0 1-1 .6l-5-3.500z" fill="#9a9a9a" stroke="none"/>
  <!-- more dots -->
  <g fill="#b4b4b4" stroke="none"><circle cx="362.700" cy="728.800" r="1.800"/><circle cx="370.900" cy="728.800" r="1.800"/><circle cx="379.100" cy="728.800" r="1.800"/></g>
</svg>
<div id="doc">
  <div id="page"></div>
</div>
<div class="d" style="left:783px;top:258px;font-size:18.67px;font-weight:bold;line-height:22px;border-left:1px solid #000;padding-left:0">A SAMPLE DOCUMENT FOR USE IN SUBMITTING TO THE</div>
<div class="d" style="left:831.500px;top:283px;font-size:18.67px;font-weight:bold;line-height:22px;letter-spacing:0.12px">8TH INTERNATIONAL MESHING ROUNDTABLE</div>
<div class="d" style="left:842px;top:324px;font-size:16px;line-height:20px;letter-spacing:0.12px">Edward T. Jones<sup style="font-size:10.400px;line-height:0;vertical-align:4.500px;padding:0 0 0 .5px">1</sup>, Alfred P. Smith<sup style="font-size:10.400px;line-height:0;vertical-align:4.500px;padding:0 0 0 .5px">2</sup>, Henry R. Anderson<sup style="font-size:10.400px;line-height:0;vertical-align:4.500px;padding:0 0 0 .5px">2</sup></div>
<div class="d" style="left:816.500px;top:361px;font-size:13.33px;font-style:italic;line-height:16px;letter-spacing:0.05px"><sup style="font-size:8.5px;line-height:0;vertical-align:5px">1</sup>Mesh Generation University, <span class="sq">MyTown</span>, CA., U.S.A. <span class="sq">myemail</span>@university.<span class="sq">edu</span></div>
<div class="d" style="left:870.500px;top:391px;font-size:13.33px;font-style:italic;line-height:16px;letter-spacing:0.05px"><sup style="font-size:8.5px;line-height:0;vertical-align:5px">2</sup>ABC Company, <span class="sq">MyTown</span>, CA., U.S.A. <span class="sq">myemail</span>@<span class="sq">abc</span>.com</div>
<div class="d" style="left:730px;top:505px;font-size:27px;line-height:32px;letter-spacing:-0.2px">ABSTRACT</div>
<div class="j" style="word-spacing:0.466px;top:553px">This is the abstract.&nbsp; The font should be nine (9) point Times Roman and should be single column, justified. There is</div>
<div class="j" style="word-spacing:0.370px;top:569px">72 points spacing between the affiliation and the Abstract heading.&nbsp; The abstract should give a clear indication of the</div>
<div class="j" style="word-spacing:-0.734px;top:585px">objective, scope, and results of the paper so that readers may determine whether the full text will be of particular interest</div>
<div class="j" style="word-spacing:-0.690px;top:601px">to them.&nbsp; The abstract should attempt to condense the whole subject mater into a few words for quick reading. Following</div>
<div class="j" style="word-spacing:0.223px;top:617px">the abstract should be a list of keywords, which will serve to identify the main topics covered in the paper for retrieval</div>
<div class="j" style="word-spacing:0.000px;top:633px;text-align-last:left">purposes.&nbsp; The number of words in the abstract should not exceed 150.</div>
<div class="d" style="left:730px;top:657px;font-size:12px;font-weight:bold;line-height:16px;letter-spacing:0.04px">Keywords: mesh generation, anisotropy, computational geometry, quadrilateral</div>
<div class="d" style="left:730px;top:715px;font-size:27px;line-height:32px;letter-spacing:-0.15px">1. INTRODUCTION</div>
<div class="abs" style="left:1104.700px;top:702.800px;width:4.500px;height:4.500px;border-radius:50%;background:#000"></div>
<div class="j" style="word-spacing:7.509px;left:1128px;width:225px;top:697px">Main Title: Centered 14 point, Bold,</div>
<div class="j" style="word-spacing:2.841px;left:1128px;width:225px;top:712px">Capitalized, <span class="sq">Arial</span> with 60 points spacing</div>
<div class="j" style="word-spacing:0.000px;left:1128px;width:225px;top:727px;text-align-last:left">immediately before</div>
<svg style="left:596px;top:119px" width="804" height="648" viewBox="596 119 804 648" font-family="Liberation Sans, Arial, sans-serif" font-size="9.3" fill="#5a5a5a" text-anchor="middle">
<rect x="598.5" y="125.5" width="14" height="14" fill="#f4f4f4" stroke="#d0d0d0"/>
<path d="M604 130v5h5" fill="none" stroke="#000" stroke-width="2"/>
<rect x="634" y="125" width="752" height="14" fill="#d9d9d9"/>
<rect x="730" y="125" width="624" height="14" fill="#fff"/>
<text x="654.4" y="135.3">2</text>
<text x="692.2" y="135.3">1</text>
<text x="767.8" y="135.3">1</text>
<text x="805.6" y="135.3">2</text>
<text x="843.4" y="135.3">3</text>
<text x="881.2" y="135.3">4</text>
<text x="919.0" y="135.3">5</text>
<text x="956.8" y="135.3">6</text>
<text x="994.6" y="135.3">7</text>
<text x="1032.4" y="135.3">8</text>
<text x="1070.2" y="135.3">9</text>
<text x="1108.0" y="135.3">10</text>
<text x="1145.8" y="135.3">11</text>
<text x="1183.6" y="135.3">12</text>
<text x="1221.4" y="135.3">13</text>
<text x="1259.2" y="135.3">14</text>
<text x="1297.0" y="135.3">15</text>
<text x="1334.8" y="135.3">16</text>
<text x="1372.6" y="135.3">17</text>
<path d="M635.5 129v5M644.5 130v3M663.5 130v3M673.5 129v5M682.5 130v3M701.5 130v3M711.5 129v5M720.5 130v3M739.5 130v3M748.5 129v5M758.5 130v3M777.5 130v3M786.5 129v5M796.5 130v3M815.5 130v3M824.5 129v5M833.5 130v3M852.5 130v3M862.5 129v5M871.5 130v3M890.5 130v3M900.5 129v5M909.5 130v3M928.5 130v3M937.5 129v5M947.5 130v3M966.5 130v3M975.5 129v5M985.5 130v3M1004.5 130v3M1013.5 129v5M1022.5 130v3M1041.5 130v3M1051.5 129v5M1060.5 130v3M1079.5 130v3M1089.5 129v5M1098.5 130v3M1117.5 130v3M1126.5 129v5M1136.5 130v3M1155.5 130v3M1164.5 129v5M1174.5 130v3M1193.5 130v3M1202.5 129v5M1211.5 130v3M1230.5 130v3M1240.5 129v5M1249.5 130v3M1268.5 130v3M1278.5 129v5M1287.5 130v3M1306.5 130v3M1315.5 129v5M1325.5 130v3M1344.5 130v3M1353.5 129v5M1363.5 130v3M1382.5 130v3" stroke="#5a5a5a" stroke-width="1" fill="none"/>
<path d="M777.5 140v3M824.5 140v3M871.5 140v3M919.5 140v3M966.5 140v3M1013.5 140v3M1060.5 140v3M1108.5 140v3M1155.5 140v3M1202.5 140v3M1249.5 140v3M1297.5 140v3M1344.5 140v3" stroke="#444" stroke-width="1" fill="none"/>
<path d="M725.5 122.5h9l-4.500 8.500zM725.5 138.5l4.500-7.500l4.500 7.500zM725.5 138.5h9v5h-9z" fill="#fff" stroke="#444" stroke-width="1"/>
<path d="M1349.5 138.5v-3l4.500-5.500l4.500 5.500v3z" fill="#fff" stroke="#444" stroke-width="1"/>
<rect x="599.5" y="145" width="11.5" height="607" fill="#fff"/>
<rect x="599.5" y="145" width="11.5" height="33" fill="#d9d9d9"/>
<text transform="translate(608.5,215.8) rotate(-90)" x="0" y="0">1</text>
<text transform="translate(608.5,253.6) rotate(-90)" x="0" y="0">2</text>
<text transform="translate(608.5,291.4) rotate(-90)" x="0" y="0">3</text>
<text transform="translate(608.5,329.2) rotate(-90)" x="0" y="0">4</text>
<text transform="translate(608.5,367.0) rotate(-90)" x="0" y="0">5</text>
<text transform="translate(608.5,404.8) rotate(-90)" x="0" y="0">6</text>
<text transform="translate(608.5,442.6) rotate(-90)" x="0" y="0">7</text>
<text transform="translate(608.5,480.4) rotate(-90)" x="0" y="0">8</text>
<text transform="translate(608.5,518.2) rotate(-90)" x="0" y="0">9</text>
<text transform="translate(608.5,556.0) rotate(-90)" x="0" y="0">10</text>
<text transform="translate(608.5,593.8) rotate(-90)" x="0" y="0">11</text>
<text transform="translate(608.5,631.6) rotate(-90)" x="0" y="0">12</text>
<text transform="translate(608.5,669.4) rotate(-90)" x="0" y="0">13</text>
<text transform="translate(608.5,707.2) rotate(-90)" x="0" y="0">14</text>
<text transform="translate(608.5,745.0) rotate(-90)" x="0" y="0">15</text>
<path d="M602 159.5h6M602 196.5h6M602 234.5h6M602 272.5h6M602 310.5h6M602 348.5h6M602 385.5h6M602 423.5h6M602 461.5h6M602 499.5h6M602 537.5h6M602 574.5h6M602 612.5h6M602 650.5h6M602 688.5h6M602 726.5h6" stroke="#5a5a5a" stroke-width="1" fill="none"/>
<path d="M604.500 149.5h1.500M604.500 168.5h1.500M604.500 187.5h1.500M604.500 206.5h1.500M604.500 225.5h1.500M604.500 244.5h1.500M604.500 263.5h1.500M604.500 281.5h1.500M604.500 300.5h1.500M604.500 319.5h1.500M604.500 338.5h1.500M604.500 357.5h1.500M604.500 376.5h1.500M604.500 395.5h1.500M604.500 414.5h1.500M604.500 433.5h1.500M604.500 452.5h1.500M604.500 470.5h1.500M604.500 489.5h1.500M604.500 508.5h1.500M604.500 527.5h1.500M604.500 546.5h1.500M604.500 565.5h1.500M604.500 584.5h1.500M604.500 603.5h1.500M604.500 622.5h1.500M604.500 641.5h1.500M604.500 659.5h1.500M604.500 678.5h1.500M604.500 697.5h1.500M604.500 716.5h1.500M604.500 735.5h1.500" stroke="#5a5a5a" stroke-width="1.2" fill="none"/>
<rect x="1386" y="119" width="14" height="634" fill="#e2e2e2"/>
<rect x="1386.5" y="120.5" width="12" height="12" fill="#f7f7f7" stroke="#cfcfcf"/>
<path d="M1389 129l3.500-4.500l3.500 4.500z" fill="#adadad"/>
<rect x="1386.5" y="738.5" width="12" height="12" fill="#f7f7f7" stroke="#cfcfcf"/>
<path d="M1389 742l3.500 4.500l3.500-4.500z" fill="#adadad"/>
<rect x="1386.5" y="149.5" width="12" height="109" fill="#f1f1f1" stroke="#cfcfcf"/>
<path d="M1389 200.500h7M1389 202.500h7M1389 204.500h7M1389 206.500h7M1389 208.500h7" stroke="#cfcfcf" fill="none"/>
<rect x="596" y="752" width="804" height="14" fill="#e2e2e2"/>
<rect x="597.5" y="753.5" width="12" height="11" fill="#f7f7f7" stroke="#cfcfcf"/>
<path d="M607 755l-5 4l5 4z" fill="#adadad"/>
<rect x="1372.5" y="753.5" width="12" height="11" fill="#f7f7f7" stroke="#cfcfcf"/>
<path d="M1376 755l5 4l-5 4z" fill="#adadad"/>
<rect x="612.5" y="753.5" width="683" height="11" fill="#f1f1f1" stroke="#cfcfcf"/>
<path d="M948.500 756v6M950.500 756v6M952.500 756v6M954.500 756v6M956.500 756v6" stroke="#cfcfcf" fill="none"/>
</svg>
<div id="rsb"></div>
<svg style="left:1401px;top:119px" width="39" height="648" viewBox="1401 119 39 648" fill="none" stroke="#a3a3a3" stroke-width="1">
  <!-- pilcrow active -->
  <path d="M1421.500 143.500v12M1424 143.500v12M1425.500 143.500h-5.500" stroke="#333" stroke-width="1.100"/><path d="M1421.500 143h-2a3.300 3.300 0 0 0 0 6.600h2z" fill="#333" stroke="none"/>
  <!-- table -->
  <path d="M1413.500 182.500h15v10h-15zM1413.500 185.500h15M1413.500 189h15M1418.500 182.500v10M1423.500 182.500v10"/><path d="M1414 183h14v2h-14z" fill="#a3a3a3" stroke="none"/>
  <!-- image -->
  <path d="M1414.500 218.500h13v13h-13z"/><circle cx="1417.500" cy="221.500" r="1"/><path d="M1414.500 229l3.500-3l2.500 2l3.500-4l3.500 3.500"/>
  <!-- header/footer -->
  <path d="M1415.500 255.500h11v15h-11z"/><path d="M1417.500 258.500h7M1417.500 267.500h7" stroke-width="1.300"/>
  <!-- shape -->
  <path d="M1417 301.500h-2.500v-7h7v2.500"/><circle cx="1423.300" cy="302.700" r="4.300"/>
  <!-- chart -->
  <path d="M1414.500 341.500h3v4h-3zM1419.500 337.500h3v8h-3zM1424.500 332.500h3v13h-3z"/>
  <!-- mail -->
  <path d="M1413.500 410.500h14.500v10h-14.500zM1413.500 410.500l7.200 6l7.300-6M1413.500 420.500l5.500-5.500M1428 420.500l-5.500-5.500"/>
  <path d="M1416.500 384c2-2.200 6-2.200 8 0"/>
</svg>
<div class="abs" style="left:1415px;top:366.500px;font-size:13px;line-height:14px;color:#a3a3a3;letter-spacing:-1.200px">Ta</div>
<div id="sb">
  <span style="left:40px">Page 1 of 3</span>
  <span style="left:136px">Word count</span>
  <span style="left:954px">English (United States)</span>
  <span style="left:1306px;top:7px">Zoom 100%</span>
</div>
<svg style="left:0;top:767px" width="1440" height="24" viewBox="0 767 1440 24" fill="none" stroke="#444" stroke-width="1">
  <path d="M105.500 767v24M941.500 767v24M1153.500 767v24M1202.500 767v24" stroke="#cbcbcb"/>
  <!-- word count -->
  <path d="M116 772.500h12M116 775h12M116 777.500h7.500"/>
  <!-- lang chevron -->
  <path d="M1080.500 778.500l2.500 2.500l2.500-2.500" stroke="#555"/>
  <!-- globe -->
  <g stroke="#333" stroke-width="1.150"><circle cx="1102.500" cy="779.500" r="6.500"/><ellipse cx="1102.500" cy="779.500" rx="3" ry="6.500"/><path d="M1102.500 773v13M1096 779.500h13M1097 776h11M1097 783h11"/></g>
  <!-- spell -->
  <rect x="1123" y="769" width="20" height="20" rx="1" fill="#7d858c" stroke="none"/>
  <path d="M1132 784.500l2 2l4.500-5" stroke="#fff" stroke-width="1.200"/>
  <!-- track changes -->
  <path d="M1177.500 783v3.500h-12v-15h12v2.500M1167.500 775.500h6M1167.500 778.500h5M1167.500 781.500h3"/><path d="M1179 775l2 2l-6 6l-2.500 .5l.5-2.500z" fill="#f1f1f1"/>
  <path d="M1184.500 778.500l2.500 2.500l2.500-2.500" stroke="#555"/>
  <!-- fit page -->
  <path d="M1216.500 772.500h12v14h-12z"/><path d="M1222.500 774.500v10M1218.500 779.500h8M1221 776l1.500-1.500l1.500 1.500M1221 783l1.500 1.500l1.500-1.500M1220 778l-1.500 1.500l1.500 1.500M1225 778l1.500 1.500l-1.500 1.500" stroke-width=".9"/>
  <!-- fit width -->
  <path d="M1245.500 774v11M1260.500 774v11M1248 779.500h10M1250.500 777l-2.500 2.500l2.500 2.500M1255.500 777l2.500 2.500l-2.500 2.500"/>
  <!-- minus / plus -->
  <path d="M1279 779.500h10M1385 779.500h11M1390.500 774v11" stroke-width="1.200"/>
</svg>
<div class="abs" style="left:116px;top:780.500px;font-size:6.500px;line-height:7px;font-weight:bold;color:#444;letter-spacing:.6px">123</div>
<div class="abs" style="left:1125px;top:773px;width:16px;text-align:center;font-size:7px;line-height:8px;font-weight:bold;color:#fff">ABC</div>
</div>
</body>
</html>
